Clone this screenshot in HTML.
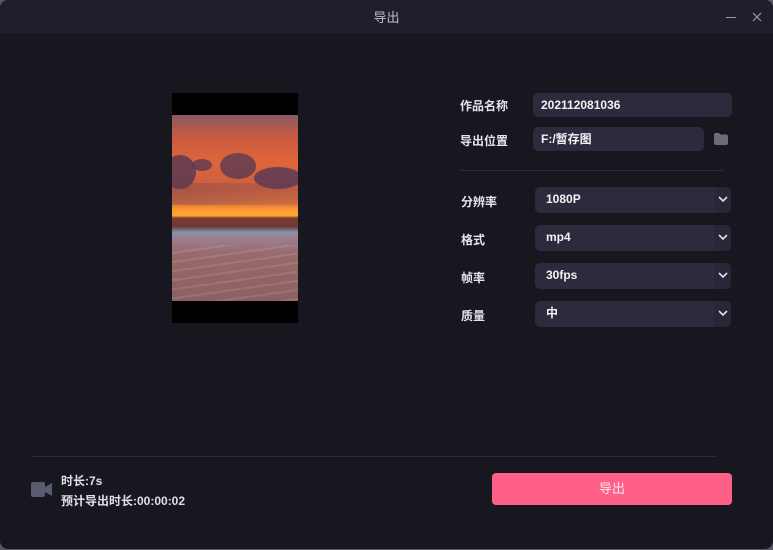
<!DOCTYPE html>
<html><head><meta charset="utf-8"><style>
*{margin:0;padding:0;box-sizing:border-box}
body{width:773px;height:550px;background:#5a5866;font-family:"Liberation Sans","Noto Sans CJK SC",sans-serif;overflow:hidden;position:relative}
.win{position:absolute;left:0;top:0;width:773px;height:549px;background:#171720;border-radius:8px;overflow:hidden}
.title{position:absolute;left:0;top:0;width:773px;height:33px;background:#1f1f2b;color:#bdbdc6;font-size:13px;text-align:center;line-height:35px}
.abs{position:absolute}
.lbl{position:absolute;color:#e4e4ea;font-size:12px;font-weight:bold}
.inp{position:absolute;background:#2b2b3d;border-radius:5px;color:#f2f2f5;font-size:12px;font-weight:bold;padding-left:8px;line-height:24px}
.sel{position:absolute;left:535px;width:196px;height:26px;background:#2b2b3d;border-radius:5px;color:#f2f2f5;font-size:12px;font-weight:bold;padding-left:11px;line-height:25px}
.sel .ar{position:absolute;right:0;top:0;width:17px;height:26px;background:#272737;border-radius:0 5px 5px 0}
.sel svg{position:absolute;right:3px;top:9px}
</style></head><body>
<div class="win">
<div class="title">导出</div>
<div class="abs" style="left:726px;top:17px;width:10px;height:1px;background:#9a9aa6"></div>
<svg class="abs" style="left:752px;top:12px" width="10" height="10"><path d="M1 1L9 9M9 1L1 9" stroke="#9a9aa6" stroke-width="1.2"/></svg>

<div class="abs" style="left:172px;top:93px;width:126px;height:230px;background:#000"></div>
<div class="abs" style="left:172px;top:115px;width:126px;height:186px;overflow:hidden;background:linear-gradient(#8a5866 0%,#c85a40 12%,#e0643a 25%,#c86040 40%,#d87040 47%,#ff9a30 51%,#ffa838 54%,#7a3a30 55.5%,#6a3a38 60%,#8890a8 63%,#9a8090 66%,#9a6a6a 75%,#8a6060 100%)">
<div class="abs" style="left:-8px;top:40px;width:32px;height:34px;border-radius:50%;background:#5a3a52;opacity:.85"></div>
<div class="abs" style="left:20px;top:44px;width:20px;height:12px;border-radius:50%;background:#5a3a52;opacity:.8"></div>
<div class="abs" style="left:48px;top:38px;width:36px;height:26px;border-radius:50%;background:#5a3a52;opacity:.8"></div>
<div class="abs" style="left:82px;top:52px;width:48px;height:22px;border-radius:50%;background:#5a3a55;opacity:.85"></div>
<div class="abs" style="left:0;top:68px;width:126px;height:22px;background:linear-gradient(90deg,rgba(90,58,82,.3),rgba(90,58,82,.1))"></div>
<div class="abs" style="left:0;top:130px;width:126px;height:56px;background:repeating-linear-gradient(172deg,transparent 0 7px,rgba(230,200,210,.15) 7px 9px)"></div>
</div>

<div class="lbl" style="left:460px;top:97px">作品名称</div>
<div class="inp" style="left:533px;top:93px;width:199px;height:24px">202112081036</div>
<div class="lbl" style="left:460px;top:132px">导出位置</div>
<div class="inp" style="left:533px;top:127px;width:171px;height:24px">F:/暂存图</div>
<svg class="abs" style="left:714px;top:133px" width="14" height="12"><path d="M0 2Q0 0 2 0H5L6.5 1.5H12Q14 1.5 14 3.5V10Q14 12 12 12H2Q0 12 0 10Z" fill="#6d6d7a"/></svg>
<div class="abs" style="left:460px;top:170px;width:263px;height:1px;background:#2c2c3a"></div>

<div class="lbl" style="left:461px;top:193px">分辨率</div>
<div class="sel" style="top:187px">1080P<div class="ar"></div><svg width="10" height="7"><path d="M1 1L5 5L9 1" stroke="#e0e0e6" stroke-width="1.6" fill="none"/></svg></div>
<div class="lbl" style="left:461px;top:231px">格式</div>
<div class="sel" style="top:225px">mp4<div class="ar"></div><svg width="10" height="7"><path d="M1 1L5 5L9 1" stroke="#e0e0e6" stroke-width="1.6" fill="none"/></svg></div>
<div class="lbl" style="left:461px;top:269px">帧率</div>
<div class="sel" style="top:263px">30fps<div class="ar"></div><svg width="10" height="7"><path d="M1 1L5 5L9 1" stroke="#e0e0e6" stroke-width="1.6" fill="none"/></svg></div>
<div class="lbl" style="left:461px;top:307px">质量</div>
<div class="sel" style="top:301px">中<div class="ar"></div><svg width="10" height="7"><path d="M1 1L5 5L9 1" stroke="#e0e0e6" stroke-width="1.6" fill="none"/></svg></div>

<div class="abs" style="left:31px;top:456px;width:685px;height:1px;background:#2c2c3a"></div>
<svg class="abs" style="left:31px;top:482px" width="21" height="15"><rect x="0" y="0" width="14" height="15" rx="2" fill="#5a5a70"/><path d="M14 5L21 1V14L14 10Z" fill="#5a5a70"/></svg>
<div class="abs" style="left:61px;top:472px;color:#e0e0e6;font-size:12px;font-weight:bold">时长:7s</div>
<div class="abs" style="left:61px;top:492px;color:#e0e0e6;font-size:12px;font-weight:bold">预计导出时长:00:00:02</div>
<div class="abs" style="left:492px;top:473px;width:240px;height:32px;background:#ff6088;border-radius:4px;color:#fde8ee;font-size:13px;text-align:center;line-height:32px">导出</div>
</div>
</body></html>
